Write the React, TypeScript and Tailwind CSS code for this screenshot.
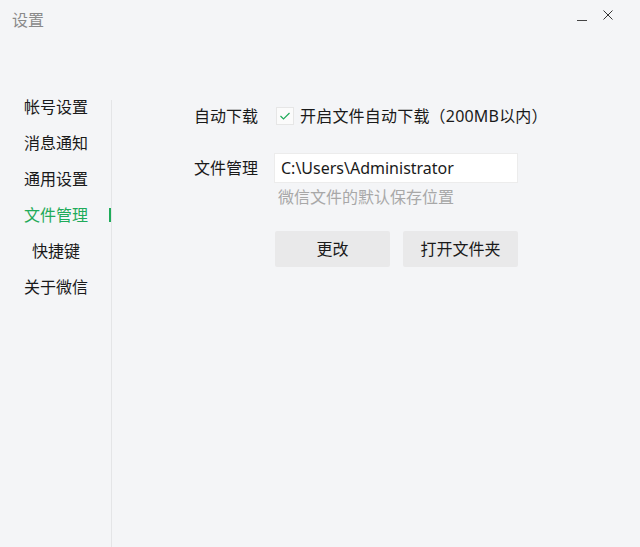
import { useState } from 'react';

const menu = ['帐号设置', '消息通知', '通用设置', '文件管理', '快捷键', '关于微信'];

export default function App() {
  const [active, setActive] = useState('文件管理');
  const [autoDownload, setAutoDownload] = useState(true);

  return (
    <div
      className="w-[640px] h-[547px] bg-[#f4f5f7] text-[#1a1a1a] flex flex-col overflow-hidden"
      style={{ fontFamily: '"Noto Sans", "Noto Sans CJK SC", sans-serif' }}
    >
      {/* title bar */}
      <div className="h-[40px] flex items-center justify-between shrink-0">
        <span className="pl-[12px] text-[16px] text-[#8a8a8a]">设置</span>
        <div className="flex items-center gap-[14px] pr-[26px]">
          <svg width="12" height="12" viewBox="0 0 12 12" className="text-[#444]">
            <path d="M1 6.5h10" stroke="currentColor" strokeWidth="1" />
          </svg>
          <svg width="12" height="12" viewBox="0 0 12 12" className="text-[#333] -mt-[10px]">
            <path d="M1.5 1.5l9 9M10.5 1.5l-9 9" stroke="currentColor" strokeWidth="1" />
          </svg>
        </div>
      </div>

      <div className="flex flex-1 min-h-0">
        {/* sidebar */}
        <div className="w-[111px] shrink-0 pt-[49px]">
          {menu.map((item) => (
            <div
              key={item}
              onClick={() => setActive(item)}
              className="relative h-[36px] flex items-center cursor-default"
            >
              <span
                className={`ml-[24px] w-[64px] text-center text-[16px] whitespace-nowrap ${
                  active === item ? 'text-[#1fab5a]' : 'text-[#1a1a1a]'
                }`}
              >
                {item}
              </span>
              {active === item && (
                <span className="absolute right-0 top-[11px] h-[14px] w-[2px] bg-[#1fab5a]" />
              )}
            </div>
          ))}
        </div>
        <div className="w-px bg-[#e4e5e7] mt-[60px] shrink-0" />

        {/* content */}
        <div className="flex-1 pl-[82px] pt-[61px] text-[16px]">
          <div className="flex items-center h-[30px]">
            <span className="w-[80px] shrink-0">自动下载</span>
            <button
              onClick={() => setAutoDownload(!autoDownload)}
              className="ml-[2px] w-[18px] h-[18px] bg-[#fbfbfb] border border-[#e6e6e6] flex items-center justify-center"
            >
              {autoDownload && (
                <svg width="12" height="10" viewBox="0 0 12 10">
                  <path d="M1.5 5l3 3 6-6" stroke="#1fab5a" strokeWidth="1.2" fill="none" />
                </svg>
              )}
            </button>
            <span className="ml-[6px] whitespace-nowrap tracking-[0.2px]">开启文件自动下载（200MB以内）</span>
          </div>

          <div className="flex items-center h-[30px] mt-[22px]">
            <span className="w-[80px] shrink-0">文件管理</span>
            <div className="w-[244px] h-[30px] bg-white border border-[#ececec] flex items-center px-[6px] text-[16px]">
              C:\Users\Administrator
            </div>
          </div>
          <div className="ml-[84px] mt-[2px] text-[#a8a8a8] h-[24px] leading-[24px]">
            微信文件的默认保存位置
          </div>

          <div className="flex gap-[13px] ml-[81px] mt-[22px]">
            <button className="w-[115px] h-[36px] bg-[#e9e9ea] rounded-[2px] text-[16px]">
              更改
            </button>
            <button className="w-[115px] h-[36px] bg-[#e9e9ea] rounded-[2px] text-[16px]">
              打开文件夹
            </button>
          </div>
        </div>
      </div>
    </div>
  );
}
